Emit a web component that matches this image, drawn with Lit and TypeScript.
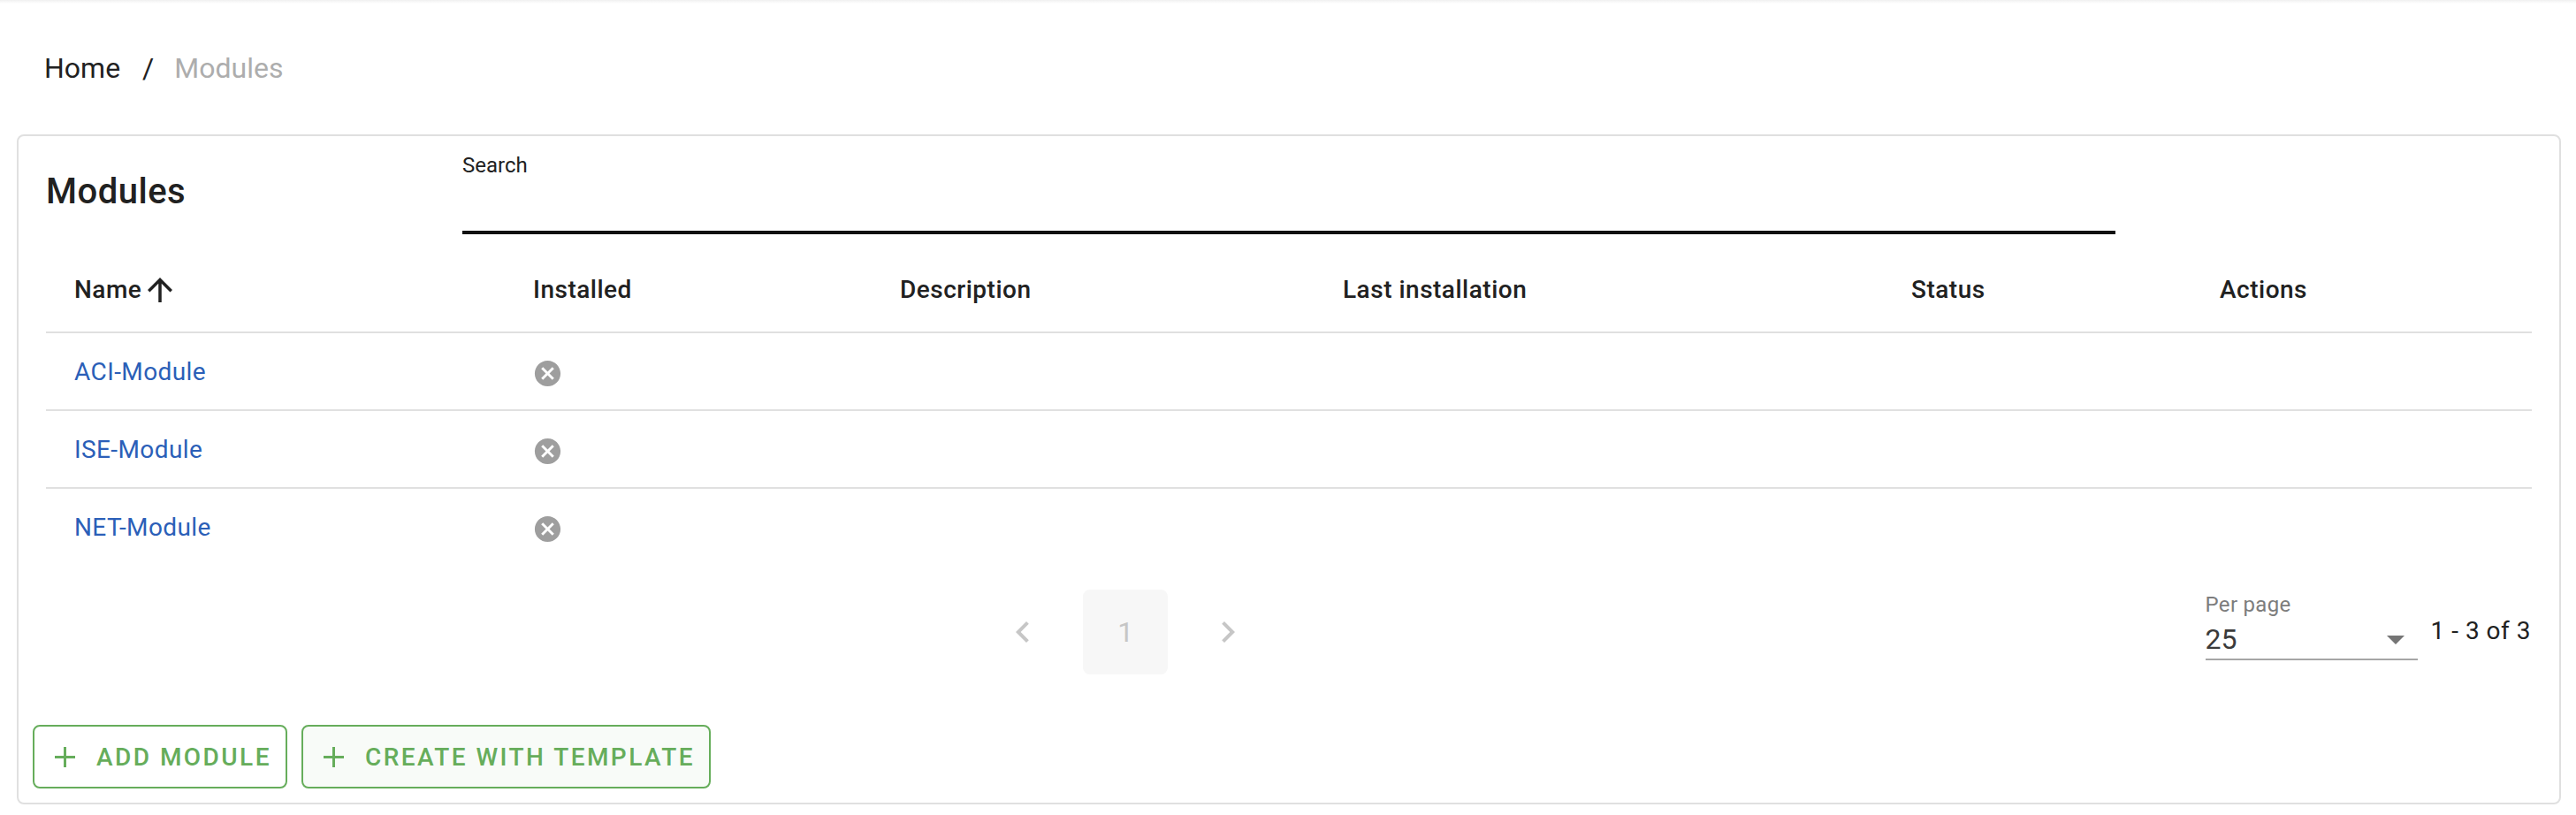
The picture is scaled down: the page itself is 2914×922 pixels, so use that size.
import { LitElement, html, css, svg } from "lit";
import { customElement } from "lit/decorators.js";

const COLS = ["Name", "Installed", "Description", "Last installation", "Status", "Actions"];
const ROWS = ["ACI-Module", "ISE-Module", "NET-Module"];

const plus = svg`<path d="M11.5 0v23M0 11.5h23" fill="none" stroke="currentColor" stroke-width="3"/>`;

@customElement("app-root")
export class AppRoot extends LitElement {
  static styles = css`
    :host { display: block; font-family: Roboto, "Liberation Sans", sans-serif; color: #212121; background: #fff; }
    * { box-sizing: border-box; }
    .topshade { height: 4px; background: linear-gradient(#f0f0f0, #fff); }
    .crumbs { display: flex; align-items: center; height: 148px; padding: 0 0 3px 50px; font-size: 32px; line-height: 48px; }
    .sep { margin: 0 23px 0 25px; }
    .muted { color: #adadad; }
    .card { margin: 0 17px 13px 19px; height: 758px; border: 2px solid #e0e0e0; border-radius: 8px; padding: 0 32px 0 31px; display: flex; flex-direction: column; }
    .head { display: flex; height: 111px; }
    .title { width: 471px; font-size: 40px; font-weight: 500; letter-spacing: 0.5px; line-height: 48px; padding-top: 39px; }
    .search { width: 1870px; border-bottom: 4px solid #111; font-size: 24px; line-height: 32px; padding-top: 17px; }
    table { border-collapse: collapse; table-layout: fixed; width: 2812px; }
    th { height: 111px; padding: 14px 0 0 32px; text-align: left; font-size: 28px; font-weight: 500; letter-spacing: 0.5px; border-bottom: 2px solid #e0e0e0; }
    td { height: 88px; padding: 0 0 0 32px; font-size: 28px; letter-spacing: 0.4px; border-bottom: 2px solid #e0e0e0; }
    tr:last-child td { border-bottom: 0; }
    .name { display: flex; align-items: center; gap: 0; }
    .name svg { margin-top: 2px; }
    .installed { display: block; margin: 4px 0 0 -1px; }
    a { color: #2b5fb8; text-decoration: none; }
    .pager { display: flex; align-items: flex-start; height: 154px; padding-top: 27px; }
    .pages { flex: 1; display: flex; align-items: center; justify-content: center; gap: 44px; color: #c6c6c6; }
    .page { width: 96px; height: 96px; border-radius: 8px; background: #f7f7f7; font-size: 32px; display: flex; align-items: center; justify-content: center; }
    .right { display: flex; align-items: flex-start; gap: 15px; padding-top: 3px; }
    .per { width: 240px; height: 77px; border-bottom: 2px solid #a6a6a6; position: relative; }
    .per label { display: block; font-size: 24px; line-height: 28px; color: #7d7d7d; letter-spacing: 0.3px; }
    .per .val { font-size: 32px; line-height: 38px; color: #3b3b3b; margin-top: 6px; }
    .caret { position: absolute; right: 15px; top: 49px; width: 0; height: 0; border: 10px solid transparent; border-top-color: #757575; border-bottom: 0; }
    .count { font-size: 28px; line-height: 34px; padding-top: 27px; letter-spacing: 0.5px; }
    .actions { display: flex; gap: 16px; margin-left: -15px; margin-top: 26px; }
    button { height: 72px; border: 2px solid #66ad5b; border-radius: 8px; background: #fff; color: #66ad5b; font: 500 28px Roboto, sans-serif; letter-spacing: 2.45px; text-transform: uppercase; display: flex; align-items: center; gap: 24px; padding: 0 16px 0 23px; }
    button.alt { background: #f8fbf8; }
    svg { display: block; }
  `;

  render() {
    return html`
      <div class="topshade"></div>
      <nav class="crumbs"><span>Home</span><span class="sep">/</span><span class="muted">Modules</span></nav>
      <section class="card">
        <div class="head">
          <div class="title">Modules</div>
          <div class="search">Search</div>
        </div>
        <table>
          <colgroup>
            ${[519, 415, 501, 643, 349, 385].map((w) => html`<col style="width:${w}px" />`)}
          </colgroup>
          <thead>
            <tr>
              ${COLS.map((c, i) => html`<th>
                ${i === 0
                  ? html`<div class="name">${c}
                      <svg width="42" height="42" viewBox="0 0 24 24"><path d="M4 12l1.41 1.41L11 7.83V20h2V7.83l5.58 5.59L20 12l-8-8-8 8z" fill="#212121"/></svg></div>`
                  : c}
              </th>`)}
            </tr>
          </thead>
          <tbody>
            ${ROWS.map((r) => html`<tr>
              <td><a href="#">${r}</a></td>
              <td>
                <svg class="installed" width="35" height="35" viewBox="0 0 24 24"><path d="M12 2C6.47 2 2 6.47 2 12s4.47 10 10 10 10-4.47 10-10S17.53 2 12 2zm5 13.59L15.59 17 12 13.41 8.41 17 7 15.59 10.59 12 7 8.41 8.41 7 12 10.59 15.59 7 17 8.41 13.41 12 17 15.59z" fill="#9e9e9e"/></svg>
              </td>
              <td></td><td></td><td></td><td></td>
            </tr>`)}
          </tbody>
        </table>
        <div class="pager">
          <div class="pages">
            <svg width="48" height="48" viewBox="0 0 24 24"><path d="M15.41 7.41L14 6l-6 6 6 6 1.41-1.41L10.83 12z" fill="#c6c6c6"/></svg>
            <div class="page">1</div>
            <svg width="48" height="48" viewBox="0 0 24 24"><path d="M10 6L8.59 7.41 13.17 12l-4.58 4.59L10 18l6-6z" fill="#c6c6c6"/></svg>
          </div>
          <div class="right">
            <div class="per"><label>Per page</label><div class="val">25</div><span class="caret"></span></div>
            <div class="count">1 - 3 of 3</div>
          </div>
        </div>
        <div class="actions">
          <button><svg width="23" height="23" viewBox="0 0 23 23">${plus}</svg>Add module</button>
          <button class="alt"><svg width="23" height="23" viewBox="0 0 23 23">${plus}</svg>Create with template</button>
        </div>
      </section>
    `;
  }
}
